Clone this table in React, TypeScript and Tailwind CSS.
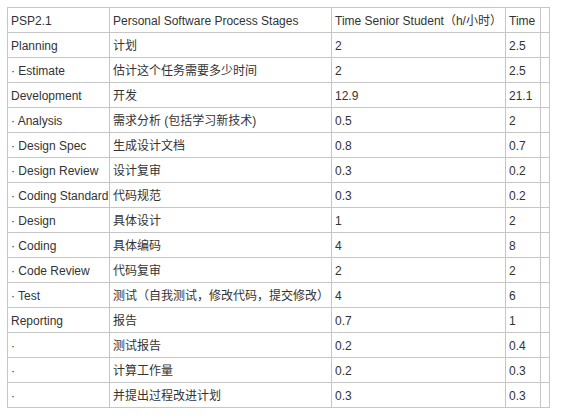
const rows: [string, string, string, string][] = [
  ['PSP2.1', 'Personal Software Process Stages', 'Time Senior Student（h/小时）', 'Time'],
  ['Planning', '计划', '2', '2.5'],
  ['· Estimate', '估计这个任务需要多少时间', '2', '2.5'],
  ['Development', '开发', '12.9', '21.1'],
  ['· Analysis', '需求分析 (包括学习新技术)', '0.5', '2'],
  ['· Design Spec', '生成设计文档', '0.8', '0.7'],
  ['· Design Review', '设计复审', '0.3', '0.2'],
  ['· Coding Standard', '代码规范', '0.3', '0.2'],
  ['· Design', '具体设计', '1', '2'],
  ['· Coding', '具体编码', '4', '8'],
  ['· Code Review', '代码复审', '2', '2'],
  ['· Test', '测试（自我测试，修改代码，提交修改）', '4', '6'],
  ['Reporting', '报告', '0.7', '1'],
  ['·', '测试报告', '0.2', '0.4'],
  ['·', '计算工作量', '0.2', '0.3'],
  ['·', '并提出过程改进计划', '0.3', '0.3'],
];

export default function App() {
  return (
    <div className="w-[582px] h-[420px] bg-white pl-[7px] pt-[7px]">
      <div
        className="grid w-[543px] grid-cols-[101px_221px_173px_34px_8px] auto-rows-[24px] gap-px bg-[#c6c6c6] p-px text-[12px] text-[#333333]"
        style={{ fontFamily: '"Liberation Sans", "Noto Sans CJK SC", sans-serif' }}
      >
        {rows.map((r, i) => (
          <div key={i} className="contents">
            {r.map((c, j) => (
              <div key={j} className="flex items-center whitespace-nowrap bg-white pl-[3px] pt-[1px] overflow-hidden">
                {c}
              </div>
            ))}
            <div className="bg-white" />
          </div>
        ))}
      </div>
    </div>
  );
}
